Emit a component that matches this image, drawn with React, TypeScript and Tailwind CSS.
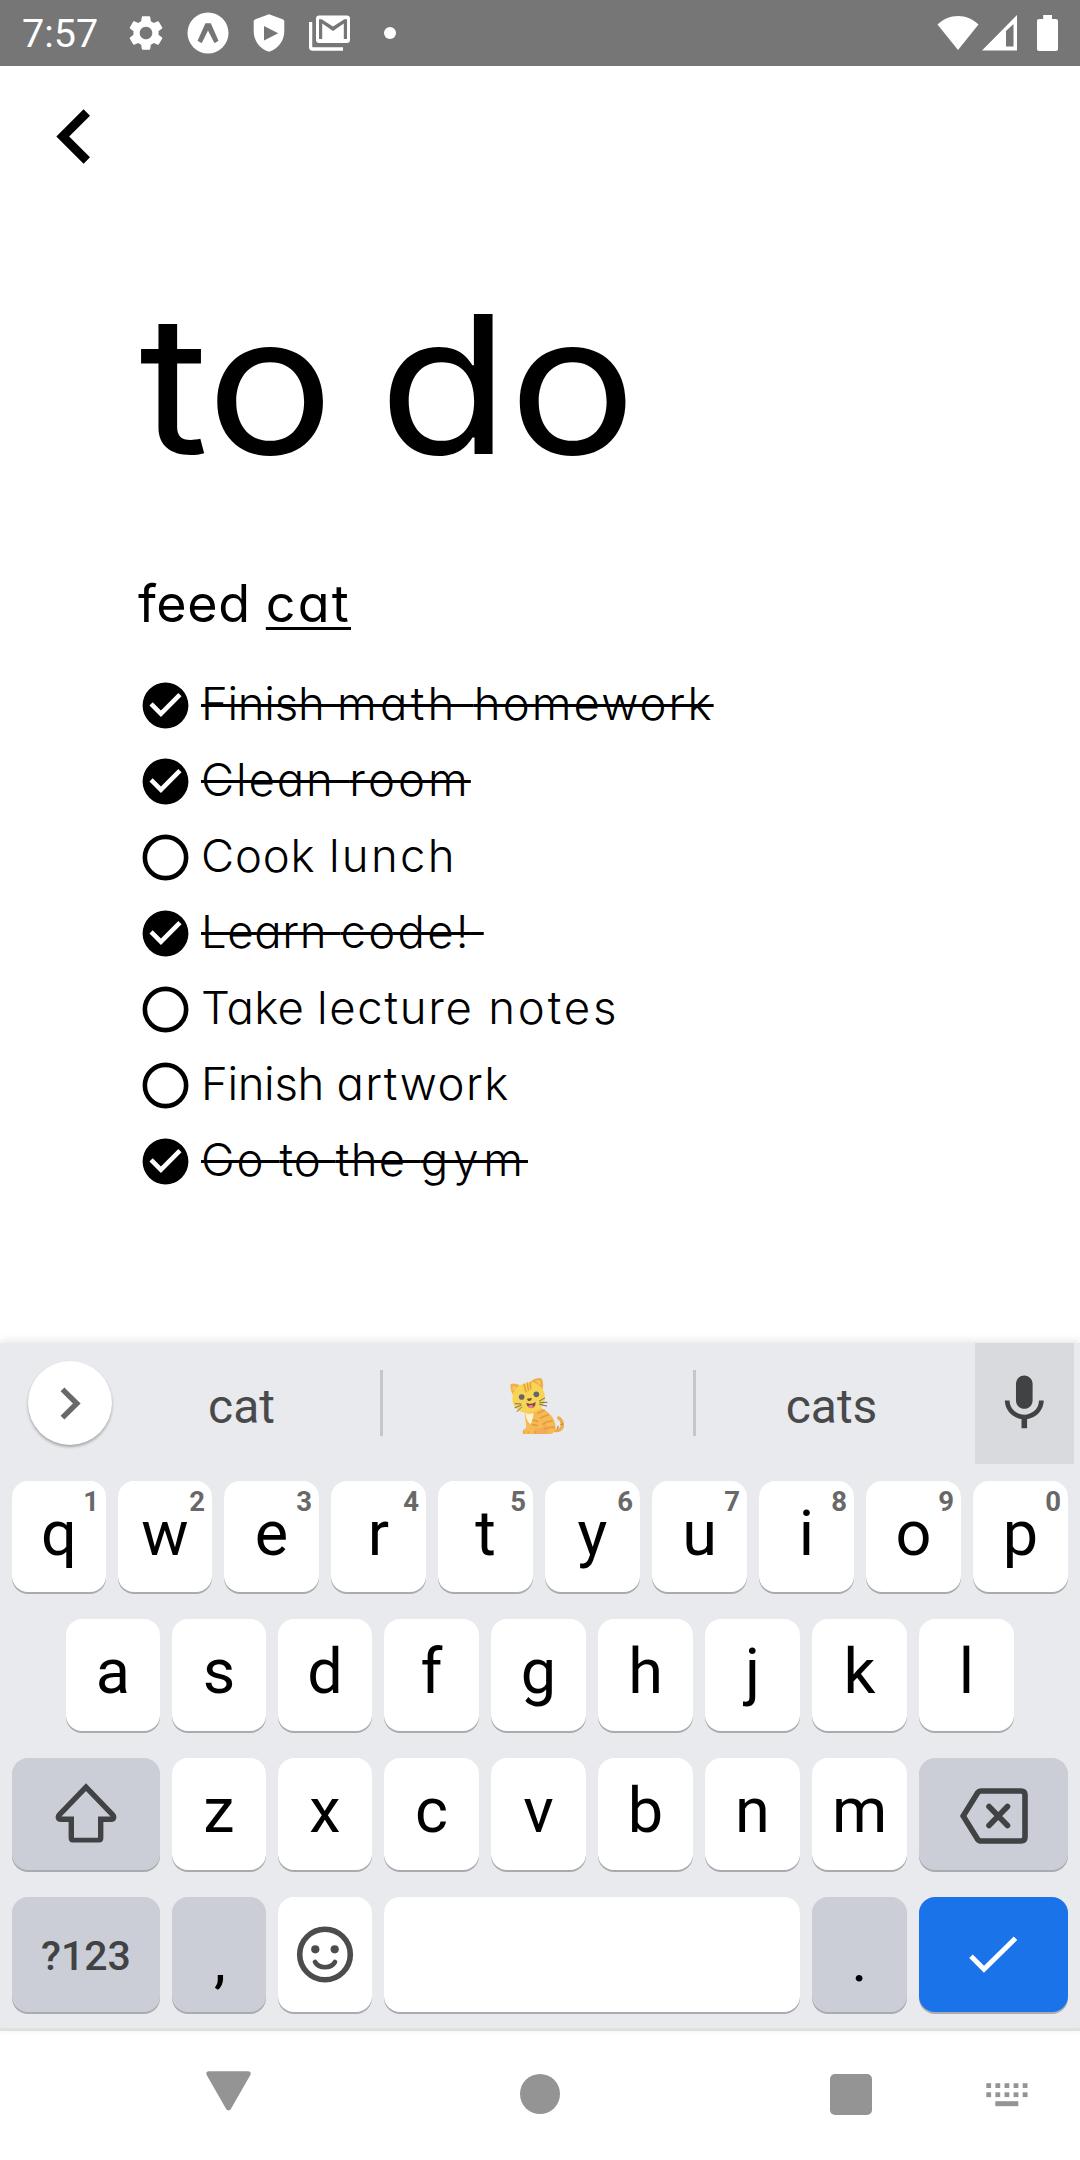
import type { ReactNode } from "react";
import { MdMic, MdSettings } from "react-icons/md";

/* ---------- data ---------- */

type Word = { text: string; tracking: string };
type Todo = { done: boolean; words: Word[] };

const todos: Todo[] = [
  {
    done: true,
    words: [
      { text: "Finish ", tracking: "tracking-[-0.27px]" },
      { text: "math ", tracking: "tracking-[3.3px]" },
      { text: "homework", tracking: "tracking-[2.1px]" },
    ],
  },
  {
    done: true,
    words: [
      { text: "Clean ", tracking: "tracking-[1.85px]" },
      { text: "room", tracking: "tracking-[3.1px]" },
    ],
  },
  {
    done: false,
    words: [
      { text: "Cook ", tracking: "tracking-[0.8px]" },
      { text: "lunch", tracking: "tracking-[2.3px]" },
    ],
  },
  {
    done: true,
    words: [
      { text: "Learn ", tracking: "tracking-[0.6px]" },
      { text: "code!", tracking: "tracking-[2.3px]" },
      { text: "\u00a0", tracking: "tracking-normal" },
    ],
  },
  {
    done: false,
    words: [
      { text: "Take ", tracking: "tracking-[0.2px]" },
      { text: "lecture ", tracking: "tracking-[1.7px]" },
      { text: "notes", tracking: "tracking-[2.9px]" },
    ],
  },
  {
    done: false,
    words: [
      { text: "Finish ", tracking: "tracking-[-0.35px]" },
      { text: "artwork", tracking: "tracking-[1.5px]" },
    ],
  },
  {
    done: true,
    words: [
      { text: "Go ", tracking: "tracking-[1.6px]" },
      { text: "to ", tracking: "tracking-[1.1px]" },
      { text: "the ", tracking: "tracking-[1.4px]" },
      { text: "gym", tracking: "tracking-[4.9px]" },
    ],
  },
];

/* ---------- status bar ---------- */

function StatusBar() {
  return (
    <header className="flex h-[66px] items-center bg-[#767676] pl-[22px] pr-[22px] text-white">
      <span className="w-[103px] pt-[2px] text-[39.5px] leading-[66px]">7:57</span>
      <MdSettings className="size-[42px]" />
      <svg className="ml-[19.5px] h-[42px] w-[42px]" viewBox="0 0 42 42">
        <circle cx="21" cy="21" r="20.5" fill="#fff" />
        <path d="M18.4 11.2h5.4l7.7 17.6-3.6 2.2c-.6-.3-1-.8-1.3-1.5L21 18.4l-5.4 11.1c-.3.7-.8 1.2-1.4 1.5l-3.6-2.2z" fill="#767676" />
      </svg>
      <svg className="ml-[24.5px] h-[38px] w-[32px]" viewBox="0 0 32 38">
        <path d="M16 .2 29.6 5.2c1.2.5 1.7 1.2 1.7 2.4V17c0 10-6.3 18-15.3 20.8C7 35 .7 27 .7 17V7.600c0-1.200.5-1.900 1.700-2.400z" fill="#fff" />
        <path d="M11 12.100 25.200 19.200 11 26.400z" fill="#767676" />
      </svg>
      <svg className="ml-[24px] h-[36px] w-[42px]" viewBox="0 0 42 36">
        <path d="M1.600 7v24.800c0 1.400.8 2.200 2.200 2.200H34" fill="none" stroke="#fff" strokeWidth="3.300" />
        <rect x="7" y=".5" width="34" height="27.500" rx="3.200" fill="#fff" />
        <path d="M10 24V4.200h2.600L24 11.400 35.400 4.200H38V24h-3.200V8.600L24 16 13.200 8.600V24z" fill="#767676" />
      </svg>
      <span className="ml-[33px] size-[12px] rounded-full bg-white" />
      <div className="ml-auto flex items-center">
        <svg className="h-[36px] w-[42px]" viewBox="0 0 42 36">
          <path d="M.5 9.600C11-2 31-2 41.500 9.600L21 35z" fill="#fff" />
        </svg>
        <svg className="ml-[3px] h-[36px] w-[35px]" viewBox="0 0 35 36">
          <path d="M35 0v35.500H0z" fill="#fff" />
          <path d="M31.500 9V31.500H24V16z" fill="#767676" />
        </svg>
        <svg className="ml-[20px] h-[36px] w-[21px]" viewBox="0 0 21 36">
          <path d="M6.200 0h8.800v4h3.800c1.400 0 2.200.8 2.200 2.200v27.600c0 1.400-.8 2.200-2.200 2.200H2.200C.8 36 0 35.200 0 33.800V6.200C0 4.800.8 4 2.200 4h4z" fill="#fff" />
        </svg>
      </div>
    </header>
  );
}

/* ---------- to-do screen ---------- */

function CheckCircle({ done }: { done: boolean }) {
  return (
    <svg className="size-[55px] shrink-0" viewBox="0 0 24 24">
      {done ? (
        <path d="M10 17l-5-5 1.410-1.420L10 14.170l7.590-7.590L19 8M12 2A10 10 0 0 0 2 12a10 10 0 0 0 10 10 10 10 0 0 0 10-10A10 10 0 0 0 12 2z" fill="#000" />
      ) : (
        <circle cx="12" cy="12" r="9" fill="none" stroke="#000" strokeWidth="2" />
      )}
    </svg>
  );
}

function TodoRow({ done, words }: Todo) {
  return (
    <li className="flex h-[76px] items-center">
      <CheckCircle done={done} />
      <span
        className={
          "ml-[8px] -mt-[4px] whitespace-pre text-[45.5px] font-light leading-[72px] " +
          (done ? "line-through decoration-black decoration-[2.5px]" : "")
        }
      >
        {words.map((w, i) => (
          <span key={i} className={w.tracking}>
            {w.text}
          </span>
        ))}
      </span>
    </li>
  );
}

function TodoScreen() {
  return (
    <main className="flex h-[1277px] flex-col bg-white font-['Inter',sans-serif] text-black [font-feature-settings:'cv11']">
      <button className="ml-[19.500px] mt-[16px] size-[109px]" aria-label="Back">
        <svg className="size-[109px]" viewBox="0 0 24 24">
          <path d="M15.410 16.580 10.830 12l4.580-4.590L14 6l-6 6 6 6z" fill="#000" />
        </svg>
      </button>
      <h1 className="ml-[138.500px] mt-[93px] h-[200px] origin-left scale-x-[1.1] self-start whitespace-pre text-[193px] leading-[200px] [word-spacing:-13px]">
        to do
      </h1>
      <p className="ml-[138px] mt-[84px] whitespace-pre text-[52px] leading-[72px]">
        <span className="tracking-[0.600px]">feed </span>
        <span className="tracking-[2.200px] underline decoration-[2.500px] underline-offset-[5px] [text-decoration-skip-ink:none]">cat</span>
      </p>
      <ul className="ml-[138px] mt-[27.500px]">
        {todos.map((t, i) => (
          <TodoRow key={i} {...t} />
        ))}
      </ul>
    </main>
  );
}

/* ---------- keyboard ---------- */

function CatEmoji() {
  return (
    <svg className="h-[59px] w-[57px] opacity-90" viewBox="55 49 171 177" role="img" aria-label="cat">
      <path d="M186 208c20 6 34-2 32-17-1-9-5-16-11-19" fill="none" stroke="#eda740" strokeWidth="10" strokeLinecap="round" />
      <path d="M203 205l3-9M212 193l9-4" stroke="#c98325" strokeWidth="4" />
      <path d="M106 148c-2 20 3 36 4 54-10 3-13 12-9 18h84c14-4 16-22 9-38-7-18-20-30-38-39z" fill="#f8b443" />
      <path d="M130 220c0-14 10-18 20-17 10 2 14-8 10-18 14 10 20 24 14 35z" fill="#f7a548" />
      <path d="M107 156c6 4 17 4 24 0 1 13-3 26-9 35-8-8-14-20-15-35z" fill="#fdf3cf" />
      <path d="M145 158l19-9M152 172l24-10M160 190c8-6 18-9 28-9M164 205c10-5 20-6 30-5M130 178l14 4M129 192l13 2" fill="none" stroke="#e0962f" strokeWidth="5" strokeLinecap="round" />
      <path d="M102 219v-8M116 219v-7M138 219v-8" stroke="#d98f2c" strokeWidth="2.500" />
      <path d="M63 71c8-3 18-1 26 3l34-11c8-8 18-11 32-10 5 8 7 20 4 32 9 18 10 40-3 55-14 17-48 22-68 10C72 142 66 122 69 103 64 92 61 82 63 71z" fill="#fad244" />
      <path d="M63 71c8-3 18-1 26 3-8 5-14 13-19 27-5-10-8-20-7-30zM123 63c8-8 18-11 32-10 5 8 7 20 4 32-9-12-20-19-36-22z" fill="#f2a93b" />
      <path d="M69 78c4-1 8 0 11 2-4 3-7 7-9 12-2-5-3-10-2-14zM138 62c4-2 9-3 12-2 2 4 3 9 2 14-4-5-9-9-14-12z" fill="#f9c561" />
      <path d="M103 71l6 22M113 67l3 21M122 66l1 19" stroke="#e69a2e" strokeWidth="5" strokeLinecap="round" />
      <circle cx="96" cy="109" r="8.500" fill="#56575b" />
      <circle cx="140" cy="101" r="8.500" fill="#56575b" />
      <path d="M110 126c8 5 20 4 28-3 0 11-4 18-12 19-9 1-15-6-16-16z" fill="#6b3c3c" />
      <path d="M115 137c5-4 12-5 17-2-2 5-5 8-9 8s-7-2-8-6z" fill="#f06e80" />
      <path d="M112 114l14-2c1 4-2 8-6 9-4 0-8-3-8-7z" fill="#693c31" />
      <path d="M77 129l17 1M76 141l18-7M82 153l14-14M149 121l16-9M151 126l21-1M150 131l21 5" fill="none" stroke="#6a6259" strokeWidth="3" strokeLinecap="round" />
    </svg>
  );
}

function SuggestionStrip() {
  return (
    <div className="flex h-[121px] text-[48px] text-[#48494b]">
      <div className="ml-[28px] mt-[18px] flex size-[84px] items-center justify-center rounded-full bg-white shadow-[0_2px_3px_rgba(0,0,0,0.3)]">
        <svg className="h-[33px] w-[21px]" viewBox="0 0 21 33">
          <path d="M2.500 2.300 16.800 16.500 2.500 30.700" fill="none" stroke="#686868" strokeWidth="5.400" />
        </svg>
      </div>
      <div className="w-[268px] pr-[9px] pt-[3px] text-center leading-[121px]">cat</div>
      <div className="mt-[27px] h-[66px] w-[3px] bg-[#c4c6ca]" />
      <div className="flex w-[310px] justify-center pr-[4px] pt-[34px]">
        <CatEmoji />
      </div>
      <div className="mt-[27px] h-[66px] w-[3px] bg-[#c4c6ca]" />
      <div className="w-[279px] pr-[8px] pt-[3px] text-center leading-[121px]">cats</div>
      <div className="flex w-[99px] items-center justify-center bg-[#d9dade]">
        <MdMic className="size-[66.600px] text-[#414244]" />
      </div>
    </div>
  );
}

function Key({ className = "w-[95px]", tone = "bg-white", children }: { className?: string; tone?: string; children?: ReactNode }) {
  return (
    <div className={`relative flex h-full min-w-0 justify-center rounded-[16px] shadow-[0_2px_0_#a9abae] ${tone} ${className}`}>
      {children}
    </div>
  );
}

function Letter({ children }: { children: ReactNode }) {
  return <span className="text-[63px] leading-[105px] text-black">{children}</span>;
}

const GREY = "bg-[#cbced6]";
const NARROW = "w-[94px]";
const REGULAR = "w-[95px]";

function Keyboard() {
  return (
    <section className="relative h-[688px] border-b-[3px] border-[#dfe0e0] bg-[#e8eaed] shadow-[0_-2px_8px_rgba(0,0,0,0.1)]">
      <SuggestionStrip />
      <div className="mt-[17px] flex h-[111px] gap-[12px] px-[12px]">
        {"qwertyuiop".split("").map((c, i) => (
          <Key key={c} className={i < 2 ? NARROW : REGULAR}>
            <Letter>{c}</Letter>
            <span className="absolute right-[7px] top-0 text-[27.500px] font-bold leading-[42px] text-[#686868]">{(i + 1) % 10}</span>
          </Key>
        ))}
      </div>
      <div className="mt-[27px] flex h-[112px] gap-[12px] px-[66px]">
        {"asdfghjkl".split("").map((c, i) => (
          <Key key={c} className={i < 3 ? NARROW : REGULAR}>
            <Letter>{c}</Letter>
          </Key>
        ))}
      </div>
      <div className="mt-[27px] flex h-[112px] gap-[12px] px-[12px]">
        <Key className="w-[148px] items-center" tone={GREY}>
          <svg className="h-[60px] w-[62px] -translate-y-[1.500px]" viewBox="0 0 62 60">
            <path d="M31 4.600 4.300 32.400c-1.800 2-1 4.400 1.500 4.400H16.300V55c0 2 .9 2.900 2.900 2.900h23.600c2 0 2.900-.9 2.900-2.900V36.800h10.500c2.500 0 3.300-2.400 1.500-4.400z" fill="none" stroke="#414244" strokeWidth="5.400" />
          </svg>
        </Key>
        {"zxcvbnm".split("").map((c, i) => (
          <Key key={c} className={i < 2 ? NARROW : REGULAR}>
            <Letter>{c}</Letter>
          </Key>
        ))}
        <Key className="w-[149px] items-center" tone={GREY}>
          <svg className="h-[56px] w-[70px] translate-y-[2px]" viewBox="0 0 70 56">
            <path d="M4.200 28 18.300 5.200C19.400 3.600 20.400 3 22.300 3H62c2.600 0 4 1.400 4 4v42c0 2.600-1.400 4-4 4H22.300c-1.900 0-2.900-.6-4-2.200z" fill="none" stroke="#414244" strokeWidth="5.600" />
            <path d="M30 18.500 48.500 37.500M48.500 18.500 30 37.500" stroke="#414244" strokeWidth="5.600" strokeLinecap="round" />
          </svg>
        </Key>
      </div>
      <div className="mt-[27px] flex h-[115px] gap-[12px] px-[12px]">
        <Key className="w-[148px]" tone={GREY}>
          <span className="text-[41px] font-medium leading-[118px] text-[#414244]">?123</span>
        </Key>
        <Key className="w-[94px]" tone={GREY}>
          <span className="pl-[2px] text-[60px] leading-[128px] text-black">,</span>
        </Key>
        <Key className="w-[94px] items-center">
          <svg className="size-[58px] -translate-y-[0.500px]" viewBox="0 0 58 58">
            <circle cx="29" cy="29" r="25.300" fill="none" stroke="#4c4c4d" strokeWidth="5.600" />
            <circle cx="19.300" cy="23.800" r="4.100" fill="#4c4c4d" />
            <circle cx="38.700" cy="23.800" r="4.100" fill="#4c4c4d" />
            <path d="M19 36.500c4 7 16 7 20 0" fill="none" stroke="#4c4c4d" strokeWidth="4.600" strokeLinecap="round" />
          </svg>
        </Key>
        <Key className="flex-1" />
        <Key tone={GREY}>
          <span className="text-[60px] leading-[128px] text-black">.</span>
        </Key>
        <Key className="w-[149px] items-center" tone="bg-[#1a73e8]">
          <svg className="h-[38px] w-[49px]" viewBox="0 0 49 38">
            <path d="M2 20.200 15 33.300 46.500 2.200" fill="none" stroke="#fff" strokeWidth="5" />
          </svg>
        </Key>
      </div>
    </section>
  );
}

/* ---------- navigation bar ---------- */

function NavBar() {
  return (
    <nav className="flex h-[129px] items-start bg-white">
      <svg className="ml-[206px] mt-[40px] h-[40px] w-[45px]" viewBox="0 0 45 40">
        <path d="M3 .3h39c2.400 0 3.400 1.800 2.200 3.900L25 37.800c-1.300 2.300-3.700 2.300-5 0L.8 4.200C-.4 2.100.6.3 3 .3z" fill="#949494" />
      </svg>
      <span className="ml-[269px] mt-[42.500px] size-[40px] rounded-full bg-[#949494]" />
      <span className="ml-[270px] mt-[43px] h-[41px] w-[41.500px] rounded-[5px] bg-[#949494]" />
      <svg className="ml-[114px] mt-[52px] h-[24px] w-[42px]" viewBox="0 0 42 24">
        <g fill="#949494">
          {[0, 1, 2, 3, 4].map((i) => (
            <g key={i}>
              <rect x={0.3 + i * 9.1} y="0.2" width="4.800" height="4.800" />
              <rect x={0.3 + i * 9.1} y="9.300" width="4.800" height="4.800" />
            </g>
          ))}
          <rect x="9.300" y="18.200" width="23" height="5" />
        </g>
      </svg>
    </nav>
  );
}

export default function App() {
  return (
    <div className="h-[2160px] w-[1080px] overflow-hidden bg-white font-['Roboto',sans-serif]">
      <StatusBar />
      <TodoScreen />
      <Keyboard />
      <NavBar />
    </div>
  );
}
